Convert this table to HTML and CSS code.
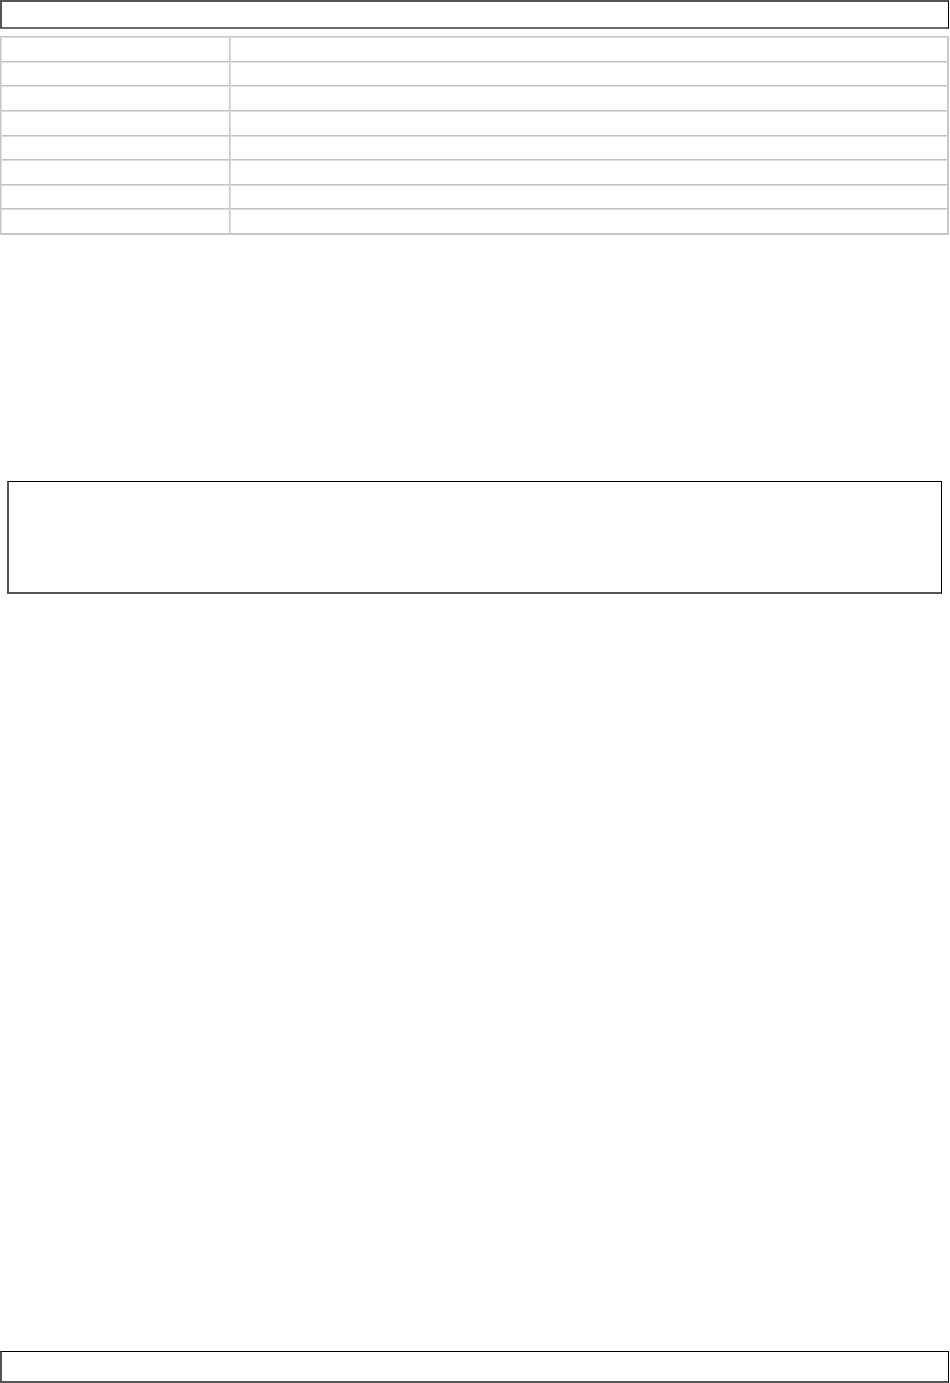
FILE: index.html
```html
<!DOCTYPE html>
<html lang="en">
<head>
    <meta charset="UTF-8">
    <meta name="viewport" content="width=device-width, initial-scale=1.0">
    <title>Page</title>
    <link rel="stylesheet" href="styles.css">
</head>
<body>
    <div class="page">
        <div class="top-bar"></div>

        <table class="info-table">
            <tr><td class="label"></td><td class="value"></td></tr>
            <tr><td class="label"></td><td class="value"></td></tr>
            <tr><td class="label"></td><td class="value"></td></tr>
            <tr><td class="label"></td><td class="value"></td></tr>
            <tr><td class="label"></td><td class="value"></td></tr>
            <tr><td class="label"></td><td class="value"></td></tr>
            <tr><td class="label"></td><td class="value"></td></tr>
            <tr><td class="label"></td><td class="value"></td></tr>
        </table>

        <div class="panel"></div>

        <div class="bottom-bar"></div>
    </div>
</body>
</html>
```

FILE: styles.css
```css
body {
    margin: 0;
    font-family: "Liberation Sans", Arial, sans-serif;
    background-color: white;
}
.page {
    display: flex;
    flex-direction: column;
    min-height: 1383px;
}
.top-bar {
    height: 29px;
    box-sizing: border-box;
    border-style: solid;
    border-width: 2px 1px 2px 2px;
    border-color: #545454 #000 #6a6a6a #545454;
    margin-right: 1px;
}
.info-table {
    margin-top: 7px;
    width: 949px;
    border-collapse: separate;
    border-spacing: 0;
    border: 1px solid #c8c8c8;
}
.info-table td {
    height: 24.625px;
    padding: 0;
    box-sizing: border-box;
    border-style: solid;
    border-width: 1px;
    border-color: #dcdcdc #c8c8c8 #c4c4c4 #dcdcdc;
}
.info-table .label {
    width: 229px;
}
.panel {
    margin: 246px 0 0 7px;
    width: 935px;
    height: 113px;
    box-sizing: border-box;
    border-style: solid;
    border-width: 1px 1px 2px 2px;
    border-color: #000 #000 #545454 #545454;
}
.bottom-bar {
    margin-top: auto;
    height: 32px;
    box-sizing: border-box;
    border-style: solid;
    border-width: 1px 1px 2px 2px;
    border-color: #000 #000 #545454 #545454;
    margin-right: 1px;
}
```
